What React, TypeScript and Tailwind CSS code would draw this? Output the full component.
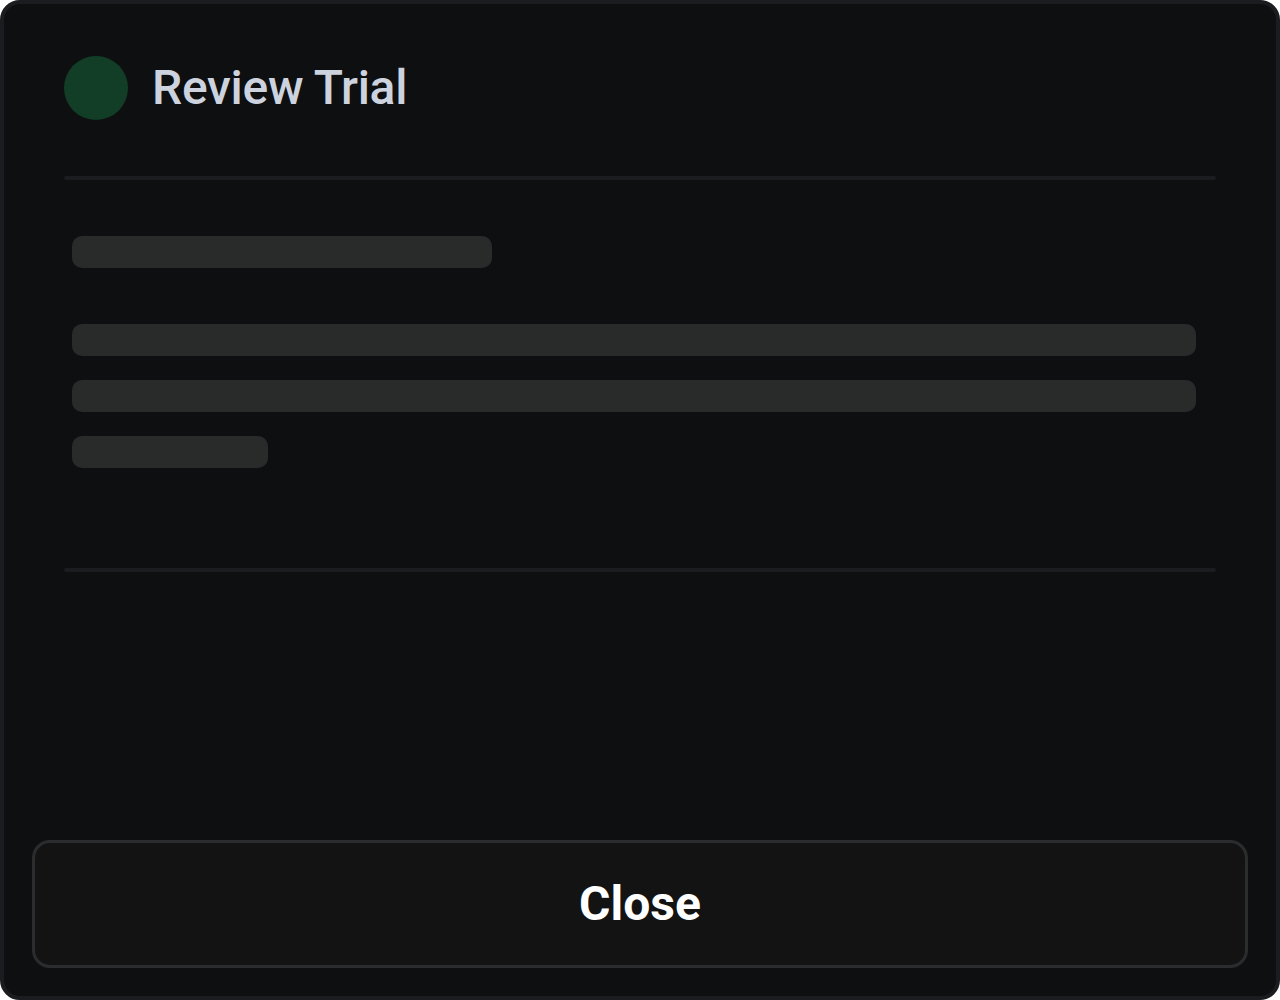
export default function App() {
  // placeholder lines for the loading body
  const lines = [
    { w: "w-[1124px]", mt: "mt-[56px]" },
    { w: "w-[1124px]", mt: "mt-[24px]" },
    { w: "w-[196px]", mt: "mt-[24px]" },
  ];

  return (
    <div className="w-[1280px] h-[1000px] bg-white" style={{ fontFamily: "Roboto, 'Liberation Sans', sans-serif" }}>
      <div className="w-full h-full flex flex-col rounded-[20px] border-4 border-[#1b1c1f] bg-[#0e0f11]">

        {/* Header */}
        <div className="px-[60px] pt-[52px]">
          <div className="flex items-center gap-6 h-[64px]">
            <div className="w-16 h-16 rounded-full bg-[#123d26]" />
            <h1 className="text-[48px] leading-none font-medium text-[#cdd3de] tracking-[-0.3px]">Review Trial</h1>
          </div>
          <div className="mt-[56px] h-[4px] rounded-full bg-[#1b1c1f]" />
        </div>

        {/* Body skeleton */}
        <div className="px-[68px] pt-[56px]">
          <div className="w-[420px] h-8 rounded-[10px] bg-[#292b2a]" />
          {lines.map((l, i) => (
            <div key={i} className={`${l.w} ${l.mt} h-8 rounded-[10px] bg-[#292b2a]`} />
          ))}
        </div>

        <div className="px-[60px] pt-[100px]">
          <div className="h-[4px] rounded-full bg-[#1b1c1f]" />
        </div>

        <div className="flex-1" />

        {/* Footer */}
        <div className="px-[28px] pb-[28px]">
          <button className="w-full h-[128px] rounded-[18px] border-[3px] border-[#2b2c2d] bg-[#131313] text-white text-[48px] font-bold">
            Close
          </button>
        </div>
      </div>
    </div>
  );
}
